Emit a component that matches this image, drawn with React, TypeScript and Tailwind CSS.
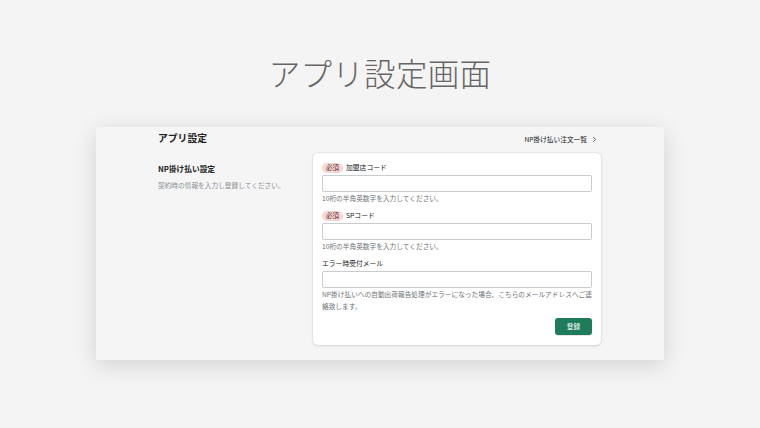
import { ChevronRight } from 'lucide-react';

const font = { fontFamily: '"Noto Sans CJK JP", "Noto Sans", sans-serif' };

function Field({ label, required, help }: { label: string; required?: boolean; help: string }) {
    return (
        <div className="flex flex-col">
            <div className="flex items-center gap-[3px] h-[11px]">
                {required && (
                    <span className="flex items-center h-[10px] px-[4px] rounded-full bg-[#fbd4d2] text-[6.5px] leading-none text-[#4a3b3b]">
                        必須
                    </span>
                )}
                <span className="text-[6.8px] leading-none text-[#202223]">{label}</span>
            </div>
            <div className="mt-[2px] h-[17px] w-full bg-white border border-[#c9cccf] rounded-[2px]" />
            <p className="text-[6.7px] leading-[12px] text-[#6d7175]">{help}</p>
        </div>
    );
}

export default function App() {
    return (
        <div className="min-h-screen bg-[#f4f4f4] flex flex-col items-center" style={font}>
            <h1 className="pt-[50px] h-[94px] text-[31.5px] leading-[44px] font-light text-[#666666] tracking-[0.3px]">
                アプリ設定画面
            </h1>
            <div className="mt-[33px] w-[568px] h-[233px] bg-[#f5f5f5] shadow-[0_5px_22px_rgba(0,0,0,0.14)] px-[62px]">
                <div className="flex items-center justify-between h-[24px]">
                    <h2 className="text-[9.8px] font-bold text-[#202223] leading-none">アプリ設定</h2>
                    <div className="flex items-center gap-[3px] pr-[3px] text-[6.7px] text-[#202223] leading-none">
                        <span>NP掛け払い注文一覧</span>
                        <ChevronRight size={9} strokeWidth={2} className="text-[#333]" />
                    </div>
                </div>
                <div className="flex mt-[2px]">
                    <div className="w-[155px] pt-[10px] flex flex-col">
                        <h3 className="text-[7.7px] font-bold text-[#202223] leading-[11px]">NP掛け払い設定</h3>
                        <p className="mt-[6px] text-[6.7px] text-[#8c9196] leading-[10px]">契約時の情報を入力し登録してください。</p>
                    </div>
                    <div className="w-[288px] bg-white rounded-[5px] shadow-[0_0_0_1px_rgba(63,63,68,0.05),0_1px_3px_rgba(63,63,68,0.15)] px-[9px] pt-[9px] pb-[10px] flex flex-col gap-[6px]">
                        <Field required label="加盟店コード" help="10桁の半角英数字を入力してください。" />
                        <Field required label="SPコード" help="10桁の半角英数字を入力してください。" />
                        <Field
                            label="エラー時受付メール"
                            help="NP掛け払いへの自動出荷報告処理がエラーになった場合、こちらのメールアドレスへご連絡致します。"
                        />
                        <div className="flex justify-end">
                            <button className="h-[17px] w-[37px] rounded-[3px] bg-[#1e7b5c] text-white text-[6.7px] leading-none shadow-[0_1px_0_rgba(0,0,0,0.1)]">
                                登録
                            </button>
                        </div>
                    </div>
                </div>
            </div>
        </div>
    );
}
